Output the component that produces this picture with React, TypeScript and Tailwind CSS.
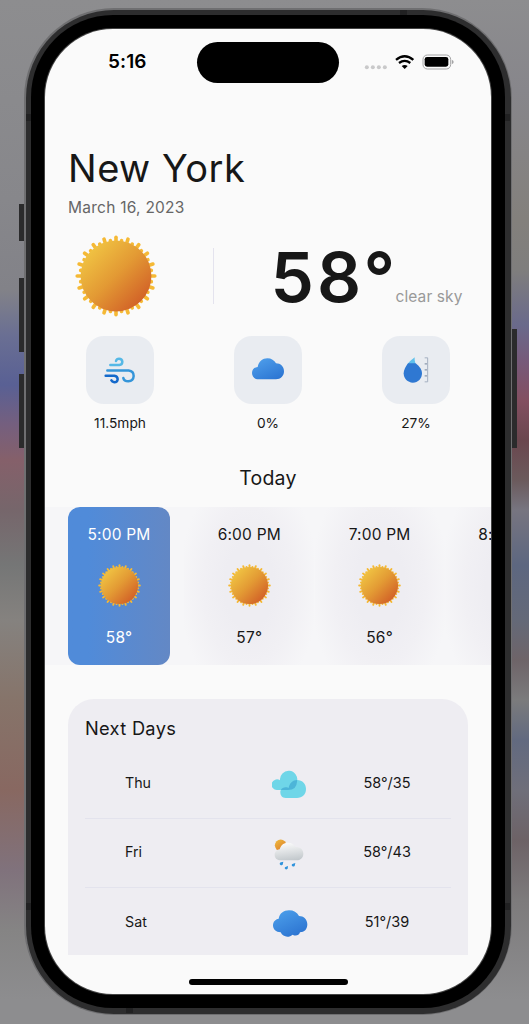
import React from "react";

const hours = [
  { time: "5:00 PM", temp: "58°", active: true },
  { time: "6:00 PM", temp: "57°", active: false },
  { time: "7:00 PM", temp: "56°", active: false },
  { time: "8:00 PM", temp: null, active: false },
];

const steps = Array.from({ length: 20 }, (_, i) => i * 18);

function Sun({ id, className }: { id: string; className: string }) {
  return (
    <svg viewBox="-41 -41 82 82" className={className}>
      <defs>
        <linearGradient id={id} x1="0.1" y1="0.1" x2="0.88" y2="0.88">
          <stop offset="0" stopColor="#f1c644" />
          <stop offset="0.5" stopColor="#e39a34" />
          <stop offset="1" stopColor="#d15f27" />
        </linearGradient>
      </defs>
      <g stroke="#f5b935" strokeWidth="3.6" strokeLinecap="round">
        {steps.map((a) => (
          <line key={a} x1="0" y1="-30" x2="0" y2="-38.8" transform={`rotate(${a})`} />
        ))}
        {steps.map((a) => (
          <line key={a} x1="0" y1="-30" x2="0" y2="-35.8" transform={`rotate(${a + 9})`} />
        ))}
      </g>
      <circle r="35.4" fill={`url(#${id})`} />
    </svg>
  );
}

function StatusIcons() {
  return (
    <svg viewBox="300 155 276 60" className="ml-[25px] h-5 w-[92px]">
      <g fill="#c9c9ca">
        <circle cx="308.500" cy="201" r="6" />
        <circle cx="326.500" cy="201" r="6" />
        <circle cx="344.500" cy="201" r="6" />
        <circle cx="362.500" cy="201" r="6" />
      </g>
      <g fill="none" stroke="#000" strokeWidth="7">
        <path d="M396 178.500Q422 157 448 178.500" />
        <path d="M405 188Q422 175 439 188" />
      </g>
      <path d="M413 197Q422 190.500 431 197L422 206Z" fill="#000" />
      <rect x="477" y="164" width="83" height="42" rx="13" fill="none" stroke="#a4a4a5" strokeWidth="3" />
      <rect x="482" y="170" width="71" height="29" rx="7" fill="#000" />
      <path d="M563.500 178.500Q569 181 569 185Q569 189 563.500 191.500Z" fill="#a4a4a5" />
    </svg>
  );
}

function WindIcon() {
  return (
    <svg viewBox="78 332 204 204" className="size-full" fill="none" strokeWidth="7.5" strokeLinecap="round">
      <path d="M151 419H178Q187 418 187 409Q186 400 177 400Q170 400 168 407" stroke="#55b8e6" />
      <path d="M142 435.500H206Q221 437 221 452Q220 467 205 468Q192 468 190 458" stroke="#3495d9" />
      <path d="M137 451.500H163Q173 453 173 462Q172 471 163 471Q156 470 154 465" stroke="#1469cb" />
    </svg>
  );
}

function CloudIcon() {
  return (
    <svg viewBox="42 332 204 204" className="size-full">
      <defs>
        <linearGradient id="cloudFill" x1="0.15" y1="0" x2="0.85" y2="1">
          <stop offset="0" stopColor="#4f9feb" />
          <stop offset="1" stopColor="#2b74d2" />
        </linearGradient>
      </defs>
      <path
        d="M116 462C103 462 96 453 96 443C96 433 103 426 113 425C116 408 128 399 142 399C154 399 163 405 168 414C182 414 192 424 192 438C192 452 182 462 168 462Z"
        fill="url(#cloudFill)"
      />
    </svg>
  );
}

function HumidityIcon() {
  return (
    <svg viewBox="487 332 204 204" className="size-full">
      <path d="M566 413C572 405 580 400 585 395.500Q584 405 587 413V420H562Z" fill="#5fc0ec" />
      <path
        d="M565 413.500H588C601 424 607 433 607 443C607 460 595 472 579.500 472C564 472 552 460 552 444C552 433 558 423 565 413.500Z"
        fill="#2f78d2"
      />
      <path d="M615 397.500H624V469.500H615" fill="none" stroke="#a5b0c1" strokeWidth="3" />
      <path d="M615 415.500H622M615 433.500H622M615 451.500H622" stroke="#8c99ad" strokeWidth="4" />
    </svg>
  );
}

function TwoCloudsIcon() {
  return (
    <svg viewBox="636 225 108 108" className="size-9">
      <defs>
        <clipPath id="backCloud">
          <path d="M652 297A16 16 0 1 1 660 268A26 26 0 1 1 711 272Q710 297 684 297Z" />
        </clipPath>
      </defs>
      <path d="M652 297A16 16 0 1 1 660 268A26 26 0 1 1 711 272Q710 297 684 297Z" fill="#6fd6e8" />
      <path
        d="M677 321C666 321 661 313 661 304C661 295 668 289 677 289C682 289 684 290 686 291C688 276 699 267 711 267C728 267 738 279 738 294C738 310 727 321 711 321Z"
        fill="#6fd6e8"
      />
      <path
        clipPath="url(#backCloud)"
        d="M677 321C666 321 661 313 661 304C661 295 668 289 677 289C682 289 684 290 686 291C688 276 699 267 711 267C728 267 738 279 738 294C738 310 727 321 711 321Z"
        fill="#4db5d8"
      />
    </svg>
  );
}

function SunShowerIcon() {
  return (
    <svg viewBox="636 435 108 108" className="size-9">
      <defs>
        <linearGradient id="showerSun" x1="0" y1="0" x2="0.7" y2="1">
          <stop offset="0" stopColor="#efbd3e" />
          <stop offset="1" stopColor="#dc7c2b" />
        </linearGradient>
        <linearGradient id="showerCloud" x1="0.4" y1="0" x2="0.6" y2="1">
          <stop offset="0" stopColor="#fbfbfb" />
          <stop offset="1" stopColor="#c2c8cc" />
        </linearGradient>
      </defs>
      <circle cx="662" cy="466" r="17.500" fill="url(#showerSun)" />
      <path
        d="M661 511C650 511 644 503 644 495C644 486 650 479 659 478C662 466 671 458 684 458C695 458 702 463 707 471C721 471 730 479 730 491C730 503 722 511 709 511Z"
        fill="url(#showerCloud)"
      />
      <g fill="#2f93dc">
        <path d="M670 515L668 524Q662 528 659 522Q659 517 663 517Z" />
        <path d="M684 528L683 536Q677 541 674 535Q674 530 678 530Z" />
        <path d="M706 519L704 528Q698 532 695 526Q695 521 699 521Z" />
      </g>
    </svg>
  );
}

function OvercastIcon() {
  return (
    <svg viewBox="636 644 108 108" className="size-9">
      <defs>
        <linearGradient id="overcast" x1="0.2" y1="0" x2="0.8" y2="1">
          <stop offset="0" stopColor="#4b9eea" />
          <stop offset="1" stopColor="#2b72d0" />
        </linearGradient>
      </defs>
      <path
        d="M662 726C648 726 639 717 639 705C639 694 646 687 656 685C659 669 671 660 687 660C701 660 711 666 717 677C731 677 742 687 742 702C742 717 733 726 720 726C717 736 706 738 698 733C688 742 669 742 662 726Z"
        fill="url(#overcast)"
      />
    </svg>
  );
}

const metrics = [
  { icon: <WindIcon />, label: "11.5mph" },
  { icon: <CloudIcon />, label: "0%" },
  { icon: <HumidityIcon />, label: "27%" },
];

const days = [
  { day: "Thu", icon: <TwoCloudsIcon />, temp: "58°/35" },
  { day: "Fri", icon: <SunShowerIcon />, temp: "58°/43" },
  { day: "Sat", icon: <OvercastIcon />, temp: "51°/39" },
];

function Screen() {
  return (
    <div className="flex h-full flex-col overflow-hidden rounded-[68px] bg-[#fafafa] text-[#171717]">
      <header className="flex h-[66px] shrink-0 items-center pl-[63px]">
        <span className="w-[89px] pt-px text-[19px] font-semibold tracking-[0.1px] text-black">5:16</span>
        <div className="h-[41px] w-[142px] rounded-full bg-black" />
        <StatusIcons />
      </header>

      <section className="shrink-0 pl-[23px] pt-[49px]">
        <h1 className="text-[38px] font-normal leading-[48px] tracking-[0.5px]">New York</h1>
        <p className="mt-[6px] text-[15.500px] font-normal leading-5 tracking-[0.25px] text-[#666]">March 16, 2023</p>
      </section>

      <section className="mt-[17px] flex h-[82px] shrink-0 items-center pl-[29.500px]">
        <Sun id="sunMain" className="size-[82px]" />
        <div className="ml-[56px] h-14 w-px bg-[#e4e3ee]" />
        <div className="ml-[57px] flex items-baseline pt-px">
          <span className="w-[125px] text-[69px] font-semibold leading-[82px] tracking-[3px]">58°</span>
          <span className="text-[15.500px] font-normal tracking-[0.1px] text-[#999]">clear sky</span>
        </div>
      </section>

      <section className="mt-[19px] grid shrink-0 grid-cols-3 px-px">
        {metrics.map((m) => (
          <div key={m.label} className="flex flex-col items-center">
            <div className="size-[68px] rounded-[18px] bg-[#e9ecf1]">{m.icon}</div>
            <span className="mt-[9px] text-[13.750px] font-normal leading-5">{m.label}</span>
          </div>
        ))}
      </section>

      <h2 className="mt-[31px] shrink-0 text-center text-[19.500px] font-normal leading-7 tracking-[0.2px]">Today</h2>

      <section className="mt-[14.500px] flex h-[158.500px] shrink-0 gap-[28.300px] overflow-hidden bg-[#f6f6f8] pl-[23px]">
        {hours.map((h, i) => (
          <div
            key={h.time}
            className={
              h.active
                ? "z-10 flex w-[102px] shrink-0 flex-col items-center rounded-[12px] bg-linear-to-r from-[#508bd9] from-20% to-[#6388c5] pt-[17px] text-white"
                : "-mx-[14px] flex w-[130px] shrink-0 flex-col items-center bg-[radial-gradient(ellipse_70px_120px_at_center,#eeedf2_35%,#f1f0f4_65%,#f6f6f8_100%)] pt-[17px]"
            }
          >
            <span className="whitespace-nowrap text-[15.500px] font-normal leading-[22px] tracking-[0.2px]">{h.time}</span>
            {h.temp && (
              <>
                <Sun id={`sunHour${i}`} className="mt-[18px] size-[43px]" />
                <span className="mt-[20px] text-[15.500px] font-normal leading-[22px] tracking-[0.2px]">{h.temp}</span>
              </>
            )}
          </div>
        ))}
      </section>

      <section className="mx-[23px] mt-[34px] h-[256px] shrink-0 rounded-t-[26px] bg-[#eeedf2] px-[17px] pt-[17px]">
        <h2 className="text-[18.250px] font-normal leading-6 tracking-[0.3px]">Next Days</h2>
        <div className="mt-[10px]">
          {days.map((d, i) => (
            <div
              key={d.day}
              className={
                i < 2
                  ? "flex h-[69px] items-center border-b border-[#e3e3ed] pl-[40px]"
                  : "flex h-[69px] items-center pl-[40px]"
              }
            >
              <span className="w-[147px] pb-[2px] text-[14.250px] font-normal">{d.day}</span>
              {d.icon}
              <span className="ml-[39px] w-[80px] pb-[2px] text-center text-[14.500px] font-normal">{d.temp}</span>
            </div>
          ))}
        </div>
      </section>

      <div className="mx-auto mt-[24px] h-[5.500px] w-[159px] shrink-0 rounded-full bg-black" />
    </div>
  );
}

export default function App() {
  return (
    <div className="h-[1024px] w-[529px] overflow-hidden pl-[24px] pt-[8px] font-['Inter',sans-serif] [background:linear-gradient(to_bottom,#8d8d8f_0,#87878b_200px,#828288_290px,#6a6f93_335px,#596094_385px,#755f7e_425px,#85606a_460px,#76666b_510px,#757676_565px,#85827f_620px,#86746a_700px,#886861_790px,#80727c_870px,#858484_930px,#8d8d8f_1000px)_left/265px_100%_no-repeat,linear-gradient(to_bottom,#8d8d8f_0,#87868b_90px,#83807c_220px,#7f7e7d_270px,#6a6a8b_325px,#765a7a_360px,#834f61_400px,#6a464e_440px,#6b5a5c_480px,#777580_510px,#5d6780_565px,#646978_620px,#6e6468_660px,#7b7b7c_700px,#626a80_740px,#6f6f7a_790px,#6d6266_840px,#7d7b7c_900px,#8d8d8f_1000px)_right/265px_100%_no-repeat]">
      <div className="relative h-[1007px] w-[488px] rounded-[90px] bg-[#6f6f71] p-[1.500px]">
        <div className="absolute -left-[5px] top-[196px] h-[37px] w-[5px] bg-[#2b2b2c]" />
        <div className="absolute -left-[5px] top-[270px] h-[74px] w-[5px] bg-[#2b2b2c]" />
        <div className="absolute -left-[5px] top-[366px] h-[74px] w-[5px] bg-[#2b2b2c]" />
        <div className="absolute -right-[5px] top-[321px] h-[119px] w-[5px] bg-[#2b2b2c]" />
        <div className="h-full rounded-[88px] bg-[#2d2d2e] p-[5.500px]">
          <div className="h-full rounded-[82px] bg-black p-[13px]">
            <div className="h-full rounded-[69px] bg-[#444] p-px">
              <Screen />
            </div>
          </div>
        </div>
        <div className="absolute left-[2px] top-[106px] h-[7px] w-[5px] bg-[#212122]" />
        <div className="absolute right-[2px] top-[106px] h-[7px] w-[5px] bg-[#212122]" />
        <div className="absolute left-[2px] top-[895px] h-[7px] w-[5px] bg-[#212122]" />
        <div className="absolute right-[2px] top-[895px] h-[7px] w-[5px] bg-[#212122]" />
        <div className="absolute right-[105px] top-[2px] h-[5px] w-[7px] bg-[#212122]" />
        <div className="absolute bottom-[2px] left-[102px] h-[5px] w-[7px] bg-[#212122]" />
      </div>
    </div>
  );
}
